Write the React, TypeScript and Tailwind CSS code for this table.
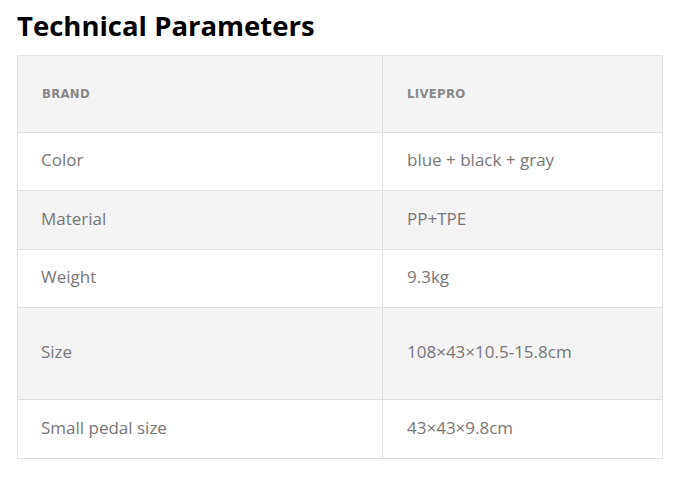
const rows: [string, string][] = [
  ['Color', 'blue + black + gray'],
  ['Material', 'PP+TPE'],
  ['Weight', '9.3kg'],
  ['Size', '108×43×10.5-15.8cm'],
  ['Small pedal size', '43×43×9.8cm'],
]

const heights = ['h-[58px]', 'h-[59px]', 'h-[58px]', 'h-[92px]', 'h-[59px]']

export default function App() {
  return (
    <div className="bg-white w-[691px] h-[480px] pl-[17px] pt-[8px] font-['Open_Sans',sans-serif]">
      <h1 className="text-[27.5px] font-bold text-black leading-[36px] mb-[11px]">Technical Parameters</h1>
      <table className="w-[646px] border-collapse">
        <tbody>
          <tr className="bg-[#f4f4f4] h-[77px]">
            <td className="w-[365px] border border-[#e0e0e0] pl-[24px] text-[13px] font-bold tracking-[0.3px] text-[#888] font-['DejaVu_Sans_Condensed','DejaVu_Sans',sans-serif]">
              BRAND
            </td>
            <td className="border border-[#e0e0e0] pl-[24px] text-[13px] font-bold tracking-[0.3px] text-[#888] font-['DejaVu_Sans_Condensed','DejaVu_Sans',sans-serif]">
              LIVEPRO
            </td>
          </tr>
          {rows.map(([k, v], i) => (
            <tr key={k} className={`${heights[i]} ${i % 2 === 1 ? 'bg-[#f4f4f4]' : 'bg-white'}`}>
              <td className="border border-[#e0e0e0] pl-[23px] pb-[3px] text-[17px] text-[#777]">{k}</td>
              <td className="border border-[#e0e0e0] pl-[24px] pb-[3px] text-[17px] text-[#777]">{v}</td>
            </tr>
          ))}
        </tbody>
      </table>
    </div>
  )
}
